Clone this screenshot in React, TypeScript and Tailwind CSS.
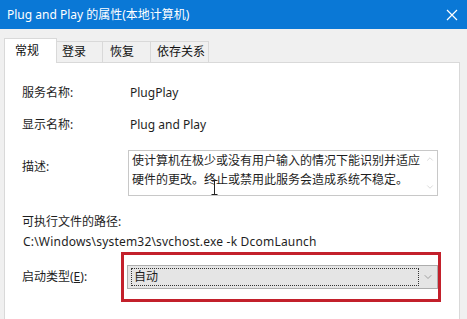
import { ChevronDown, ChevronUp } from 'lucide-react'

const font = { fontFamily: '"Noto Sans", "Noto Sans CJK SC", sans-serif' }

const tabs = [
  { label: '常规', w: 'w-[53px] pl-[10px]', active: true },
  { label: '登录', w: 'w-[46px] pl-[5px]' },
  { label: '恢复', w: 'w-[48px] pl-[7px]' },
  { label: '依存关系', w: 'w-[58px] pl-[6px]' },
]

export default function App() {
  return (
    <div className="h-[319px] w-[467px] overflow-hidden bg-[#f0f0f0]" style={font}>
      {/* title bar */}
      <div className="flex h-[29px] items-center justify-between bg-[#0a78d6] pl-[7px] pr-[8px] text-[12px] text-white">
        <span>Plug and Play 的属性(本地计算机)</span>
        <svg width="12" height="12" viewBox="0 0 12 12" className="mr-[1px]">
          <path d="M1 1 L11 11 M11 1 L1 11" stroke="white" strokeWidth="1.2" />
        </svg>
      </div>

      {/* tabs */}
      <div className="mt-[9px] flex items-end pl-[4px]">
        {tabs.map((t) =>
          t.active ? (
            <div
              key={t.label}
              className={`relative z-10 -mb-px flex h-[25px] items-center border border-b-0 border-[#d9d9d9] bg-white text-[12px] text-[#111] ${t.w}`}
            >
              {t.label}
            </div>
          ) : (
            <div
              key={t.label}
              className={`flex h-[21px] items-center border border-b-0 border-l-0 border-[#d9d9d9] bg-[#f0f0f0] text-[12px] text-[#111] ${t.w}`}
            >
              {t.label}
            </div>
          )
        )}
      </div>

      {/* panel */}
      <div className="relative ml-[4px] h-[300px] w-[456px] border border-[#d9d9d9] bg-white pl-[17px] pt-[20px] text-[12px] text-[#1e1e1e]">
        <div className="flex h-[20px] items-center">
          <span className="w-[106px]">服务名称:</span>
          <span className="pl-[2px]">PlugPlay</span>
        </div>
        <div className="mt-[12px] flex h-[20px] items-center">
          <span className="w-[106px]">显示名称:</span>
          <span className="pl-[2px]">Plug and Play</span>
        </div>
        <div className="mt-[15px] flex items-start">
          <span className="mt-[7px] w-[106px] leading-[20px]">描述:</span>
          <div className="relative flex h-[46px] w-[310px] border border-[#c8c8c8] bg-white">
            <div className="flex-1 px-[3px] leading-[19px]">
              使计算机在极少或没有用户输入的情况下能识别并适应硬件的更改。终止或禁用此服务会造成系统不稳定。
            </div>
            <div className="flex w-[14px] flex-col items-center justify-between py-[3px] text-[#c4c4c4]">
              <ChevronUp size={10} strokeWidth={1.5} />
              <ChevronDown size={10} strokeWidth={1.5} />
            </div>
          </div>
        </div>
        <div className="mt-[16px] h-[20px] leading-[20px]">可执行文件的路径:</div>
        <div className="h-[20px] pl-[1px] leading-[20px] tracking-[0.2px]">C:\Windows\system32\svchost.exe -k DcomLaunch</div>
        <div className="mt-[13px] flex items-center">
          <span className="w-[105px]">
            启动类型(<span className="underline">E</span>):
          </span>
          <div className="relative flex h-[24px] w-[311px] items-center border border-[#adadad] bg-[#e5e5e5] pl-[3px]">
            <div className="flex h-[18px] flex-1 items-center border border-dotted border-[#333] pl-[2px]">自动</div>
            <div className="flex w-[18px] justify-center text-[#888]">
              <ChevronDown size={12} strokeWidth={1.5} />
            </div>
            <div className="pointer-events-none absolute -left-[7px] -right-[4px] -top-[14px] -bottom-[14px] border-[3px] border-[#c3202b]" />
          </div>
        </div>

        {/* text cursor */}
        <svg width="7" height="15" viewBox="0 0 7 15" className="absolute left-[206px] top-[117px]">
          <path d="M0.5 0.5 H6.5 M3.5 0.5 V14.5 M0.5 14.5 H6.5" stroke="#222" strokeWidth="1" fill="none" />
        </svg>
      </div>
    </div>
  )
}
